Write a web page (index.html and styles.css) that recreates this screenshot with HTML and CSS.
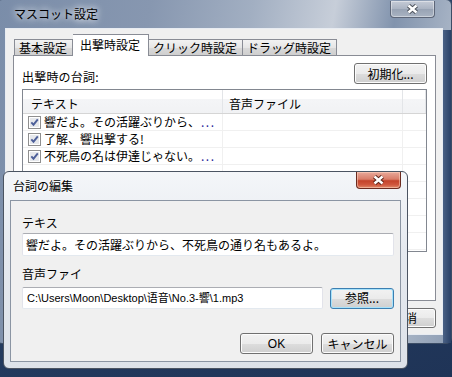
FILE: index.html
```html
<!DOCTYPE html>
<html lang="ja">
  <head>
    <meta charset="UTF-8" />
    <title>マスコット設定</title>
    <link rel="stylesheet" href="styles.css" />
  </head>
  <body>
    <div class="desktop">
      <!-- main settings window -->
      <div class="window main-window">
        <div class="titlebar">
          <span class="title">マスコット設定</span>
          <div class="close-btn inactive">
            <svg width="13" height="10" viewBox="0 0 13 10"><path d="M2.5 1.5 L10.5 8.5 M10.5 1.5 L2.5 8.5" stroke="#4a4f58" stroke-width="4.4"/><path d="M2.5 1.5 L10.5 8.5 M10.5 1.5 L2.5 8.5" stroke="#fff" stroke-width="2.4"/></svg>
          </div>
        </div>
        <div class="client">
          <div class="tabs">
            <div class="tab">基本設定</div>
            <div class="tab active">出撃時設定</div>
            <div class="tab">クリック時設定</div>
            <div class="tab">ドラッグ時設定</div>
          </div>
          <div class="tab-panel">
            <div class="panel-head">
              <span class="panel-label">出撃時の台詞:</span>
              <div class="btn init-btn">初期化...</div>
            </div>
            <div class="listview">
              <div class="lv-row lv-header">
                <div class="col c1">テキスト</div>
                <div class="col c2">音声ファイル</div>
                <div class="col c3"></div>
              </div>
              <div class="lv-row">
                <div class="col c1"><span class="check"><svg width="13" height="13" viewBox="0 0 13 13"><rect x="0.5" y="0.5" width="12" height="12" fill="#fff" stroke="#8f8f8f"/><rect x="2" y="2" width="9" height="9" fill="#e6e8ec"/><path d="M3.3 6.3 L5.5 8.7 L9.8 3.4" fill="none" stroke="#4d5f99" stroke-width="1.9"/></svg></span>響だよ。その活躍ぶりから、<span class="ell">...</span></div>
                <div class="col c2"></div>
                <div class="col c3"></div>
              </div>
              <div class="lv-row">
                <div class="col c1"><span class="check"><svg width="13" height="13" viewBox="0 0 13 13"><rect x="0.5" y="0.5" width="12" height="12" fill="#fff" stroke="#8f8f8f"/><rect x="2" y="2" width="9" height="9" fill="#e6e8ec"/><path d="M3.3 6.3 L5.5 8.7 L9.8 3.4" fill="none" stroke="#4d5f99" stroke-width="1.9"/></svg></span>了解、響出撃する!</div>
                <div class="col c2"></div>
                <div class="col c3"></div>
              </div>
              <div class="lv-row">
                <div class="col c1"><span class="check"><svg width="13" height="13" viewBox="0 0 13 13"><rect x="0.5" y="0.5" width="12" height="12" fill="#fff" stroke="#8f8f8f"/><rect x="2" y="2" width="9" height="9" fill="#e6e8ec"/><path d="M3.3 6.3 L5.5 8.7 L9.8 3.4" fill="none" stroke="#4d5f99" stroke-width="1.9"/></svg></span>不死鳥の名は伊達じゃない。<span class="ell">...</span></div>
                <div class="col c2"></div>
                <div class="col c3"></div>
              </div>
              <div class="lv-row"><div class="col c1"></div><div class="col c2"></div><div class="col c3"></div></div>
              <div class="lv-row"><div class="col c1"></div><div class="col c2"></div><div class="col c3"></div></div>
              <div class="lv-row"><div class="col c1"></div><div class="col c2"></div><div class="col c3"></div></div>
              <div class="lv-row"><div class="col c1"></div><div class="col c2"></div><div class="col c3"></div></div>
              <div class="lv-row"><div class="col c1"></div><div class="col c2"></div><div class="col c3"></div></div>
            </div>
          </div>
          <div class="window-buttons">
            <div class="btn close-main-btn">取消</div>
          </div>
        </div>
      </div>

      <!-- edit dialog -->
      <div class="window dialog">
        <div class="titlebar dialog-titlebar">
          <span class="title">台詞の編集</span>
          <div class="close-btn active-close">
            <svg width="13" height="10" viewBox="0 0 13 10"><path d="M2.5 1.5 L10.5 8.5 M10.5 1.5 L2.5 8.5" stroke="#5a2418" stroke-width="4.4"/><path d="M2.5 1.5 L10.5 8.5 M10.5 1.5 L2.5 8.5" stroke="#fff" stroke-width="2.4"/></svg>
          </div>
        </div>
        <div class="client dialog-client">
          <div class="field-label">テキス</div>
          <div class="textbox text-input">響だよ。その活躍ぶりから、不死鳥の通り名もあるよ。</div>
          <div class="field-label sound-label">音声ファイ</div>
          <div class="path-row">
            <div class="textbox path-input">C:\Users\Moon\Desktop\语音\No.3-響\1.mp3</div>
            <div class="btn browse-btn">参照...</div>
          </div>
          <div class="dialog-buttons">
            <div class="btn ok-btn">OK</div>
            <div class="btn cancel-btn">キャンセル</div>
          </div>
        </div>
      </div>
    </div>
  </body>
</html>
```

FILE: styles.css
```css
/* Reset */
* {
  margin: 0;
  padding: 0;
  box-sizing: border-box;
}

body {
  width: 452px;
  height: 377px;
  overflow: hidden;
  font-family: "Noto Sans CJK JP", "Noto Sans CJK SC", sans-serif;
  font-size: 12px;
  line-height: 14px;
  color: #000;
}

/* Desktop */
.desktop {
  position: relative;
  width: 452px;
  height: 377px;
  background: linear-gradient(160deg, #2f4a70 0%, #253d61 50%, #1f3457 100%);
}

/* Aero window frame */
.window {
  position: absolute;
  display: flex;
  flex-direction: column;
}

.titlebar {
  position: relative;
  height: 28px;
  flex-shrink: 0;
}

.title {
  display: block;
  padding: 7px 0 0 9px;
  text-shadow: 0 0 6px #fff, 0 0 10px rgba(255, 255, 255, 0.8);
}

.close-btn {
  position: absolute;
  top: 1px;
  right: 8px;
  width: 45px;
  height: 17px;
  display: flex;
  align-items: center;
  justify-content: center;
  border: 1px solid #5d6678;
  border-top: none;
  border-radius: 0 0 4px 4px;
}

.close-btn.inactive {
  background: linear-gradient(#c5cbd6, #aab3c2 50%, #98a3b4 51%, #a9b3c2);
  box-shadow: inset 0 0 0 1px rgba(255, 255, 255, 0.4);
}

/* Main window */
.main-window {
  left: -4px;
  top: -1px;
  width: 456px;
  height: 345px;
  padding: 0 8px 8px 8px;
  border: 1px solid #3c4d66;
  border-radius: 6px;
  background: linear-gradient(100deg, #7a8da9 0%, #8797b0 30%, #a2afc2 50%, #c7ced9 66%, #8193ad 78%, #a9b5c6 90%, #8d9db4 100%);
}

.main-window::after {
  content: "";
  position: absolute;
  right: 0;
  top: 30px;
  bottom: 0;
  width: 8px;
  background: linear-gradient(to right, #4a6185, #2a4167);
}

.main-window .client {
  flex: 1;
  background: #f0f0f0;
  border: 1px solid #e8ecf2;
  padding: 5px 6px 0 7px;
  position: relative;
  z-index: 1;
}

/* Tabs */
.tabs {
  display: flex;
  align-items: flex-end;
  height: 21px;
  padding-left: 1px;
}

.tab {
  height: 16px;
  padding: 1px 5px 0 4px;
  border: 1px solid #898c95;
  border-bottom: none;
  border-left: none;
  background: linear-gradient(#f2f2f2, #e6e6e6 50%, #d9d9d9 51%, #cfcfcf);
  white-space: nowrap;
}

.tab:first-child {
  border-left: 1px solid #898c95;
}

.tab.active {
  height: 22px;
  margin-bottom: -1px;
  padding: 3px 8px 0 7px;
  background: #fff;
  position: relative;
  z-index: 2;
}

.tab-panel {
  height: 246px;
  border: 1px solid #898c95;
  background: #fff;
  padding: 7px 8px 0 8px;
}

.panel-head {
  display: flex;
  justify-content: space-between;
  align-items: flex-end;
}

.panel-label {
  letter-spacing: 0.2px;
}

/* Buttons */
.btn {
  display: flex;
  align-items: center;
  justify-content: center;
  height: 21px;
  border: 1px solid #707070;
  border-radius: 3px;
  background: linear-gradient(#f2f2f2 0%, #ebebeb 50%, #dddddd 51%, #cfcfcf 100%);
  box-shadow: inset 0 0 0 1px #fcfcfc;
  white-space: nowrap;
}

.init-btn {
  width: 73px;
}

/* List view */
.listview {
  margin-top: 5px;
  height: 163px;
  border: 1px solid #828790;
  overflow: hidden;
}

.lv-row {
  display: flex;
  height: 17px;
  border-bottom: 1px solid #f0f0f0;
}

.lv-header {
  height: 24px;
  border-bottom: 1px solid #d5d5d5;
  background: linear-gradient(#ffffff, #ffffff 40%, #f4f5f7 41%, #f1f2f4);
}

.lv-header .col {
  padding: 4px 0 0 8px;
  border-right: 1px solid #e3e5e8;
}

.col {
  display: flex;
  align-items: center;
  border-right: 1px solid #f0f0f0;
  white-space: nowrap;
  overflow: hidden;
}

.c1 {
  width: 200px;
  padding-left: 5px;
}

.c2 {
  width: 180px;
}

.c3 {
  flex: 1;
  border-right: none;
}

.lv-header .c2 {
  padding-left: 6px;
}

.check {
  display: flex;
  width: 13px;
  height: 13px;
  margin-right: 3px;
}

.ell {
  color: #28239a;
  letter-spacing: 1.5px;
  padding-left: 1px;
}

.window-buttons {
  display: flex;
  justify-content: flex-end;
  margin-top: 7px;
}

.close-main-btn {
  width: 62px;
  height: 20px;
}

/* Dialog */
.dialog {
  left: 3px;
  top: 171px;
  width: 405px;
  height: 198px;
  padding: 0 6px 6px 6px;
  border: 1px solid #4b5462;
  border-radius: 6px;
  background: linear-gradient(#f4f6f9, #e5e9ef 40%, #dde2e9);
  z-index: 5;
}

.dialog-titlebar .title {
  padding: 7px 0 0 3px;
}

.dialog .close-btn {
  top: 0;
  right: 0;
}

.close-btn.active-close {
  border-color: #6b2b20;
  background: linear-gradient(#e9a99a, #d97d69 45%, #c4432b 55%, #d0583e 80%, #e08a6b);
  box-shadow: inset 0 0 0 1px rgba(255, 220, 200, 0.5);
}

.dialog-client {
  flex: 1;
  background: #f0f0f0;
  border: 1px solid #8b95a3;
  padding: 15px 6px 0 11px;
  display: flex;
  flex-direction: column;
}

.field-label {
  height: 14px;
}

.sound-label {
  margin-top: 11px;
}

.textbox {
  height: 23px;
  display: flex;
  align-items: center;
  padding-left: 3px;
  background: #fff;
  border: 1px solid #e2e3ea;
  border-top-color: #abadb3;
  border-bottom-color: #e3e9ef;
  border-radius: 2px;
  white-space: nowrap;
  overflow: hidden;
}

.text-input {
  margin-top: 3px;
}

.path-row {
  display: flex;
  align-items: center;
  margin-top: 6px;
}

.path-input {
  width: 301px;
  height: 22px;
  font-family: "Liberation Sans", "Noto Sans CJK SC", sans-serif;
  font-size: 11px;
  padding-left: 4px;
}

.browse-btn {
  width: 64px;
  margin-left: 7px;
  border-color: #3c7fb1;
  box-shadow: inset 0 0 0 1px #a7e2fb;
}

.dialog-buttons {
  display: flex;
  justify-content: flex-end;
  gap: 8px;
  margin-top: 24px;
}

.ok-btn {
  width: 73px;
  font-family: "Liberation Sans", sans-serif;
}

.cancel-btn {
  width: 73px;
}
```
